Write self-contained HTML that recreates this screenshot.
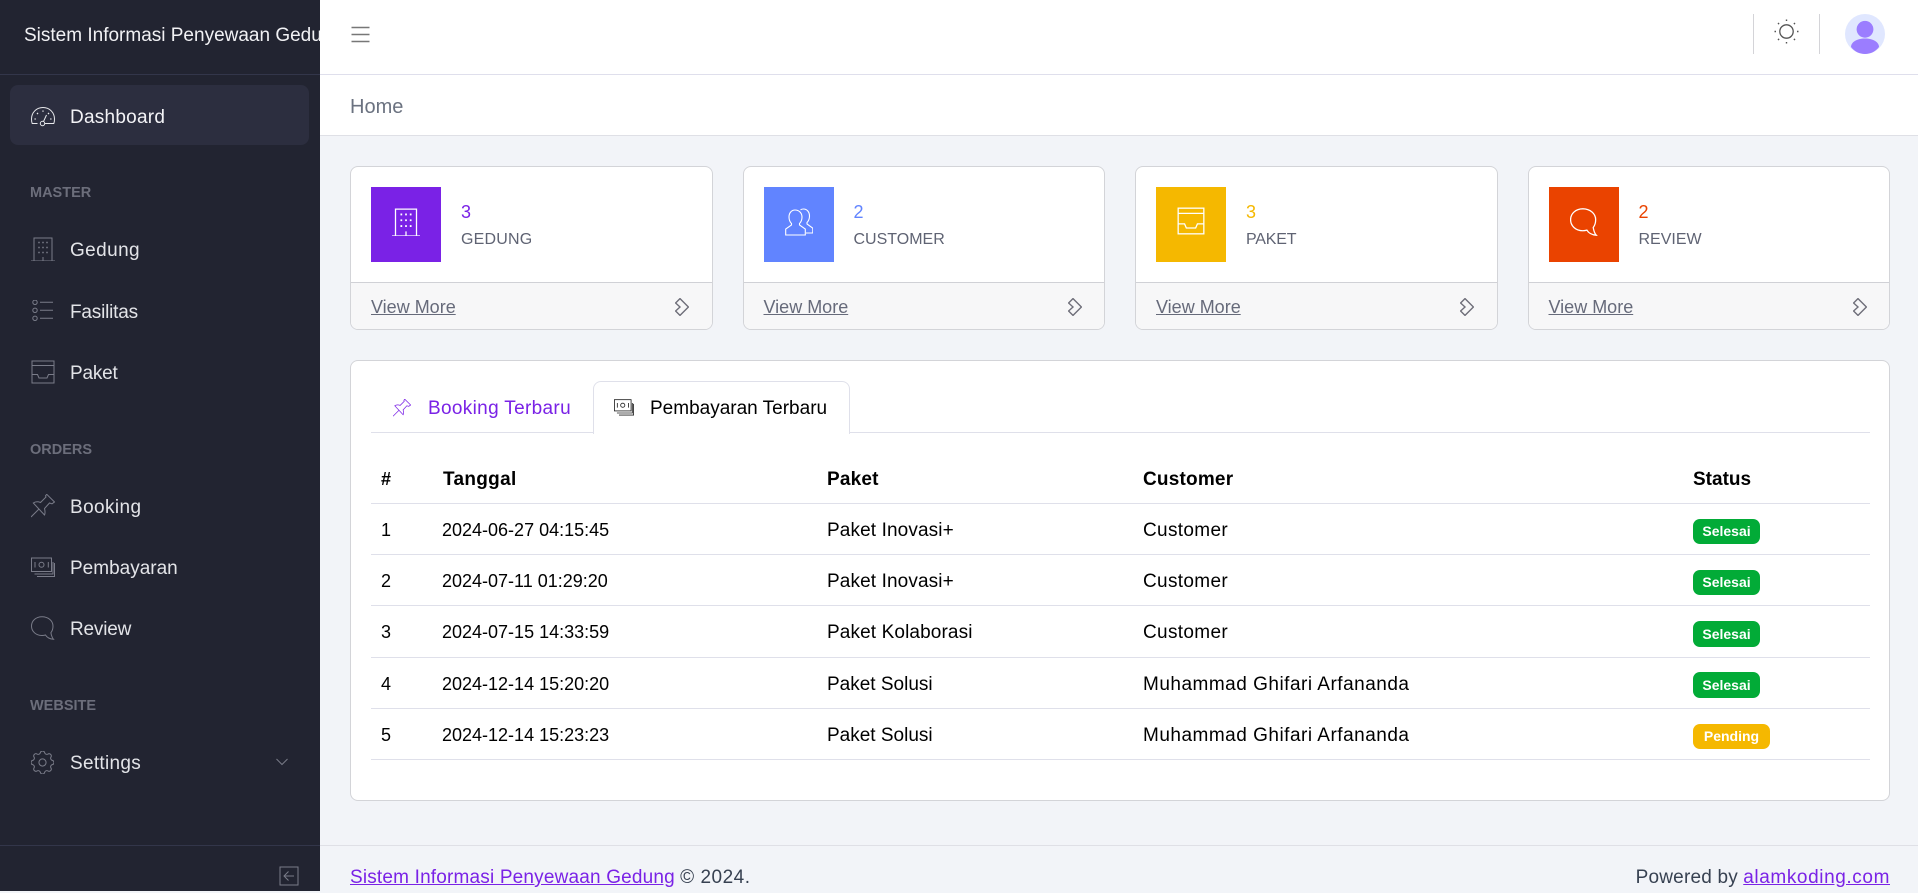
<!DOCTYPE html>
<html lang="id">
<head>
<meta charset="utf-8">
<title>Sistem Informasi Penyewaan Gedung</title>
<style>
html,body{margin:0;padding:0;width:1918px;height:891px;overflow:hidden;background:#f2f4f8;font-family:"Liberation Sans",sans-serif;color:#000}
.a{position:absolute;white-space:nowrap}
.t{position:absolute;white-space:nowrap;line-height:30px;height:30px}
svg{position:absolute;display:block;fill:none;stroke:currentColor;stroke-width:1;overflow:visible}
#side{position:absolute;left:0;top:0;width:320px;height:891px;background:#222431;overflow:hidden}
.nav{font-size:19px;color:#e3e4e8;left:70px}
.sec{font-size:14.5px;font-weight:700;color:#6c6e7b;left:30px}
.ic{color:#7a7c89}
.card{position:absolute;top:166px;width:360.5px;height:162px;background:#fff;border:1px solid #d3d4d8;border-radius:8px;overflow:hidden}
.card .foot{position:absolute;left:0;right:0;bottom:0;height:46px;background:#f7f7f8;border-top:1px solid #d0d1d6}
.box{position:absolute;left:20px;top:20px;width:70px;height:75px;color:#fff}
.box svg{stroke-width:1.1}
.num{position:absolute;left:110px;top:30px;line-height:30px;font-size:18px}
.lab{position:absolute;left:110px;top:58px;line-height:30px;font-size:16px;color:#5f6373}
.vm{position:absolute;left:20px;top:9px;line-height:30px;font-size:18px;color:#666a7a;text-decoration:underline}
.chv{left:324px;top:15px;color:#6f6f7a;stroke-width:1.4}
.hl{position:absolute;height:1px;background:#dfe0ea}
.cell{font-size:18px;color:#000}
.c19{font-size:19px;color:#000}
.th{font-size:19px;font-weight:700;color:#000}
.badge{position:absolute;left:1693px;width:67px;background:#02ab37;color:#fff;border-radius:7px;font-size:14px;font-weight:700;text-align:center}
</style>
</head>
<body>

<svg width="0" height="0" style="position:absolute">
<symbol id="building" viewBox="0 0 24 24"><path d="M3 24V1h18v23M0 24h24M12 20v4"/><path stroke-width="1.600" stroke-dasharray="1.500 2.500" d="M7.250 5.500H17M7.250 10.500H17M7.250 15.500H17"/></symbol>
<symbol id="users" viewBox="0 0 28 28"><path d="M10 2C6.500 2 4 5 4 9c0 2.500 1 5 2.500 6.500V17L.7 21v6h19.600v-6l-5.800-4v-1.500C16 14 17 11.500 17 9c0-4-3-7-7-7z"/><path d="M15.500 1.800c1-.6 2-.8 3-.8 3.500 0 6 3 6 7 0 2.500-1 5-2.500 6.500V16l5.800 4.200V25H21"/></symbol>
<symbol id="inbox" viewBox="0 0 24 24"><rect x="1" y="1" width="22" height="22"/><path d="M1 5.500h22M1 14.500h5.500L8 18h8l1.500-3.500H23"/></symbol>
<symbol id="chat" viewBox="0 0 24 24"><path d="M11 .7C5 .7.5 4.700.5 10c0 5.500 4.500 9.500 10.500 9.500 1.300 0 2.500-.2 3.500-.5 1.500 2.500 4 4 8 4.300-1.500-1.600-2.200-4.200-2.600-6.600C21.300 15 22 12.700 22 10 22 4.700 17 .7 11 .7z"/></symbol>
<symbol id="gauge" viewBox="0 0 24 24"><path d="M6.500 19.500H1.200C.6 18 .5 16.500.5 15 .5 8.500 5.500 3.500 12 3.500S23.500 8.500 23.500 15c0 1.500-.1 3-.7 4.500H14"/><circle cx="11.500" cy="19.500" r="2.200"/><path d="M12.500 17.500l3-6.500"/><path stroke-width="1.300" d="M3.500 15h1.300M19.200 15h1.300M6 9l1 1M18 9l-1 1M12 6.500v1.300"/></symbol>
<symbol id="list" viewBox="0 0 24 24"><circle cx="4" cy="2.300" r="2.200"/><circle cx="4" cy="10.300" r="2.200"/><circle cx="4" cy="18.300" r="2.200"/><path d="M9 2.300h13M9 10.300h13M9 18.300h13"/></symbol>
<symbol id="pin" viewBox="0 0 24 24"><path d="M15.700.3L23.500 8 21 9.800 18.500 9l-5 5.500c.5 2 1 4.500 0 6.500L2.300 9c2.200-1.500 4.700-1.500 7.200-.5L15 3l-.5-1.200z"/><path d="M0 23l8-8"/></symbol>
<symbol id="cash" viewBox="0 0 24 24"><rect x=".5" y="2" width="20" height="13.500"/><circle cx="10.500" cy="8.700" r="2.500"/><path d="M4 6v5.500M17.300 6v5.500M3.500 18H22V6M6 20.500h17.500V7"/></symbol>
<symbol id="gear" viewBox="3 3 18 18"><path stroke-width=".8" d="M10.325 4.317c.426-1.756 2.924-1.756 3.35 0a1.724 1.724 0 002.573 1.066c1.543-.94 3.31.826 2.37 2.37a1.724 1.724 0 001.065 2.572c1.756.426 1.756 2.924 0 3.35a1.724 1.724 0 00-1.066 2.573c.94 1.543-.826 3.31-2.37 2.37a1.724 1.724 0 00-2.572 1.065c-.426 1.756-2.924 1.756-3.35 0a1.724 1.724 0 00-2.573-1.066c-1.543.94-3.31-.826-2.37-2.37a1.724 1.724 0 00-1.065-2.572c-1.756-.426-1.756-2.924 0-3.35a1.724 1.724 0 001.066-2.573c-.94-1.543.826-3.31 2.37-2.37.996.608 2.296.07 2.572-1.065z"/><circle stroke-width=".8" cx="12" cy="12" r="2.800"/></symbol>
<symbol id="chev" viewBox="0 0 14 18"><path d="M.6 5L5 .6 13.400 9 5 17.400.6 13 5 9z"/></symbol>
</svg>

<div id="side">
  <div class="t" style="left:24px;top:21px;font-size:19px;color:#f1f1f4">Sistem Informasi Penyewaan Gedung</div>
  <div class="a" style="left:0;top:74px;width:320px;height:1px;background:#33364a"></div>
  <div class="a" style="left:10px;top:85px;width:299px;height:60px;background:#2c2e3f;border-radius:8px"></div>

  <svg style="left:31px;top:104px;color:#e8e9ec" width="24" height="24"><use href="#gauge"/></svg>
  <div class="t nav" style="top:103px;color:#f3f3f6;letter-spacing:.25px">Dashboard</div>

  <div class="t sec" style="top:178px">MASTER</div>
  <svg class="ic" style="left:31px;top:237px" width="24" height="24"><use href="#building"/></svg>
  <div class="t nav" style="top:236px;letter-spacing:.4px">Gedung</div>
  <svg class="ic" style="left:31px;top:300px" width="24" height="24"><use href="#list"/></svg>
  <div class="t nav" style="top:298px;letter-spacing:-.2px">Fasilitas</div>
  <svg class="ic" style="left:31px;top:360px" width="24" height="24"><use href="#inbox"/></svg>
  <div class="t nav" style="top:359px;letter-spacing:-.2px">Paket</div>

  <div class="t sec" style="top:435px">ORDERS</div>
  <svg class="ic" style="left:31px;top:494px" width="24" height="24"><use href="#pin"/></svg>
  <div class="t nav" style="top:493px;letter-spacing:.4px">Booking</div>
  <svg class="ic" style="left:31px;top:556px" width="24" height="24"><use href="#cash"/></svg>
  <div class="t nav" style="top:554px">Pembayaran</div>
  <svg class="ic" style="left:31px;top:616px" width="24" height="24"><use href="#chat"/></svg>
  <div class="t nav" style="top:615px;letter-spacing:-.2px">Review</div>

  <div class="t sec" style="top:691px">WEBSITE</div>
  <svg class="ic" style="left:31px;top:751px" width="23" height="23"><use href="#gear"/></svg>
  <div class="t nav" style="top:749px;letter-spacing:.3px">Settings</div>
  <svg class="ic" style="left:276px;top:758px" width="12" height="8"><path d="M.5 1L6 6.500 11.500 1"/></svg>

  <div class="a" style="left:0;top:845px;width:320px;height:1px;background:#33364a"></div>
  <svg class="ic" style="left:279px;top:866px" width="20" height="20"><rect x="1" y="1" width="18" height="18"/><path d="M15 10H5M9.500 5.500L5 10l4.500 4.500"/></svg>
</div>

<!-- top bar -->
<div class="a" style="left:320px;top:0;width:1598px;height:74px;background:#fff;border-bottom:1px solid #dfdfec"></div>
<div class="a" style="left:320px;top:75px;width:1598px;height:60px;background:#fff;border-bottom:1px solid #dfe0e6"></div>
<svg style="left:351px;top:26px;color:#777" width="19" height="17"><path stroke-width="1.500" d="M.5 1.500h18M.5 8.500h18M.5 15.500h18"/></svg>
<div class="t" style="left:350px;top:92px;font-size:20px;color:#6b7280">Home</div>
<div class="a" style="left:1753px;top:14px;width:1px;height:40px;background:#d4d4d8"></div>
<div class="a" style="left:1819px;top:14px;width:1px;height:40px;background:#d4d4d8"></div>
<svg style="left:1774px;top:19px;color:#555" width="25" height="25"><circle cx="12.500" cy="12.500" r="6.700" stroke-width="1.300"/><path stroke-width="1.400" d="M12.500 .5V2M12.500 23v1.500M.5 12.500H2M23 12.500h1.500M4 4l1.100 1.100M19.900 19.900L21 21M4 21l1.100-1.100M19.900 5.100L21 4"/></svg>
<svg style="left:1845px;top:14px;stroke:none" width="40" height="40"><circle cx="20" cy="20" r="20" fill="#e0e7ff"/><circle cx="20" cy="15.300" r="8.400" fill="#9b7dff"/><path fill="#9b7dff" d="M6 33c0-5 6-8.500 14-8.500s14 3.500 14 8.500c-3.500 4.500-8.500 7-14 7s-10.500-2.500-14-7z"/></svg>

<!-- cards -->
<div class="card" style="left:350px">
  <div class="box" style="background:#7a22e6"><svg style="left:21px;top:21px" width="28" height="28"><use href="#building"/></svg></div>
  <div class="num" style="color:#7a22e6">3</div><div class="lab" style="letter-spacing:.2px">GEDUNG</div>
  <div class="foot"><span class="vm">View More</span><svg class="chv" width="14" height="18"><use href="#chev"/></svg></div>
</div>
<div class="card" style="left:742.5px">
  <div class="box" style="background:#6184ff"><svg style="left:21px;top:21px" width="28" height="28"><use href="#users"/></svg></div>
  <div class="num" style="color:#6184ff">2</div><div class="lab">CUSTOMER</div>
  <div class="foot"><span class="vm">View More</span><svg class="chv" width="14" height="18"><use href="#chev"/></svg></div>
</div>
<div class="card" style="left:1135px">
  <div class="box" style="background:#f5b800"><svg style="left:21px;top:20px" width="28" height="28"><use href="#inbox"/></svg></div>
  <div class="num" style="color:#f5b800">3</div><div class="lab" style="letter-spacing:-.2px">PAKET</div>
  <div class="foot"><span class="vm">View More</span><svg class="chv" width="14" height="18"><use href="#chev"/></svg></div>
</div>
<div class="card" style="left:1527.5px">
  <div class="box" style="background:#ea4300"><svg style="left:21px;top:21px" width="28" height="28"><use href="#chat"/></svg></div>
  <div class="num" style="color:#ea4300">2</div><div class="lab">REVIEW</div>
  <div class="foot"><span class="vm">View More</span><svg class="chv" width="14" height="18"><use href="#chev"/></svg></div>
</div>

<!-- main card -->
<div class="a" style="left:350px;top:360px;width:1538px;height:439px;background:#fff;border:1px solid #d3d4d8;border-radius:8px"></div>
<div class="hl" style="left:371px;top:432px;width:1499px"></div>
<div class="a" style="left:593px;top:381px;width:255px;height:52px;background:#fff;border:1px solid #dfe0ea;border-bottom:none;border-radius:8px 8px 0 0"></div>
<svg style="left:393px;top:399px;color:#7a22e6" width="18" height="18"><use href="#pin"/></svg>
<div class="t" style="left:428px;top:394px;font-size:19px;color:#7a22e6;letter-spacing:.33px">Booking Terbaru</div>
<svg style="left:614px;top:398px;color:#222" width="20" height="20"><use href="#cash"/></svg>
<div class="t" style="left:650px;top:394px;font-size:19px;color:#000">Pembayaran Terbaru</div>

<div class="t th" style="left:381px;top:464px;font-size:18px">#</div>
<div class="t th" style="left:443px;top:465px;letter-spacing:.3px">Tanggal</div>
<div class="t th" style="left:827px;top:465px;letter-spacing:.2px">Paket</div>
<div class="t th" style="left:1143px;top:465px;letter-spacing:.2px">Customer</div>
<div class="t th" style="left:1693px;top:465px">Status</div>
<div class="hl" style="left:371px;top:503px;width:1499px"></div>

<div class="t cell" style="left:381px;top:515px">1</div>
<div class="t cell" style="left:442px;top:515px">2024-06-27 04:15:45</div>
<div class="t c19" style="left:827px;top:516px;letter-spacing:.12px">Paket Inovasi+</div>
<div class="t c19" style="left:1143px;top:516px;letter-spacing:.33px">Customer</div>
<div class="badge" style="top:519px;height:25px;line-height:25px">Selesai</div>
<div class="hl" style="left:371px;top:554px;width:1499px"></div>

<div class="t cell" style="left:381px;top:566px">2</div>
<div class="t cell" style="left:442px;top:566px">2024-07-11 01:29:20</div>
<div class="t c19" style="left:827px;top:567px;letter-spacing:.12px">Paket Inovasi+</div>
<div class="t c19" style="left:1143px;top:567px;letter-spacing:.33px">Customer</div>
<div class="badge" style="top:570px;height:25px;line-height:25px">Selesai</div>
<div class="hl" style="left:371px;top:605px;width:1499px"></div>

<div class="t cell" style="left:381px;top:617px">3</div>
<div class="t cell" style="left:442px;top:617px">2024-07-15 14:33:59</div>
<div class="t c19" style="left:827px;top:618px;letter-spacing:.12px">Paket Kolaborasi</div>
<div class="t c19" style="left:1143px;top:618px;letter-spacing:.33px">Customer</div>
<div class="badge" style="top:621px;height:26px;line-height:26px">Selesai</div>
<div class="hl" style="left:371px;top:657px;width:1499px"></div>

<div class="t cell" style="left:381px;top:669px">4</div>
<div class="t cell" style="left:442px;top:669px">2024-12-14 15:20:20</div>
<div class="t c19" style="left:827px;top:670px">Paket Solusi</div>
<div class="t c19" style="left:1143px;top:670px;letter-spacing:.5px">Muhammad Ghifari Arfananda</div>
<div class="badge" style="top:672px;height:26px;line-height:26px">Selesai</div>
<div class="hl" style="left:371px;top:708px;width:1499px"></div>

<div class="t cell" style="left:381px;top:720px">5</div>
<div class="t cell" style="left:442px;top:720px">2024-12-14 15:23:23</div>
<div class="t c19" style="left:827px;top:721px">Paket Solusi</div>
<div class="t c19" style="left:1143px;top:721px;letter-spacing:.5px">Muhammad Ghifari Arfananda</div>
<div class="badge" style="top:724px;height:25px;line-height:25px;width:77px;background:#f5b800">Pending</div>
<div class="hl" style="left:371px;top:759px;width:1499px"></div>

<!-- footer -->
<div class="a" style="left:320px;top:845px;width:1598px;height:1px;background:#dfe0e6"></div>
<div class="t" style="left:350px;top:863px;font-size:19px;color:#374151"><span style="color:#7a22e6;text-decoration:underline;letter-spacing:.18px">Sistem Informasi Penyewaan Gedung</span> <span style="letter-spacing:.5px">© 2024.</span></div>
<div class="t" style="right:28px;top:863px;font-size:19px;color:#374151"><span style="letter-spacing:.2px">Powered by</span> <span style="color:#7a22e6;text-decoration:underline;letter-spacing:.6px">alamkoding.com</span></div>

</body>
</html>
